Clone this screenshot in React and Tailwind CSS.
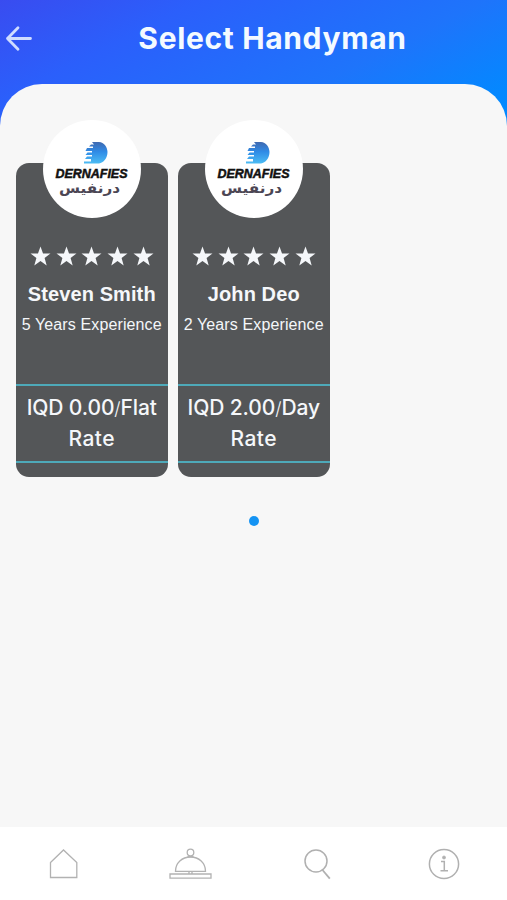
import React from "react"

const handymen = [
  { name: "Steven Smith", experience: "5 Years Experience", rate: "IQD 0.00", unit: "Flat" },
  { name: "John Deo", experience: "2 Years Experience", rate: "IQD 2.00", unit: "Day" },
]

function BrandLogo() {
  return (
    <svg className="w-full h-full" viewBox="0 0 98 98">
      <defs>
        <linearGradient id="brand" x1="0" y1="0" x2="0" y2="1">
          <stop offset="0" stopColor="#3f69b0" />
          <stop offset="0.45" stopColor="#2f8be6" />
          <stop offset="1" stopColor="#4cbcf4" />
        </linearGradient>
      </defs>
      <path
        fill="url(#brand)"
        d="M49 22H56C61 22.5 64.5 27 64.5 32C64.5 38 60.5 43 56 43.5H41V41.5H48V39H42L44 36.5H49V35H42.5L44.5 32.5H49V31H42.5L44 28H50V26.5H46L48 24.5H51Z"
      />
      <text x="12.5" y="57.8" textLength="72" lengthAdjust="spacingAndGlyphs" fontFamily="Liberation Sans, sans-serif" fontSize="12.5" fontWeight="700" fontStyle="italic" fill="#111" stroke="#111" strokeWidth="0.5">
        DERNAFIES
      </text>
      <text x="46.5" y="73" textAnchor="middle" direction="rtl" textLength="61" lengthAdjust="spacingAndGlyphs" fontFamily="DejaVu Sans, sans-serif" fontSize="14" fontWeight="700" fill="#4c4654">
        درنفيس
      </text>
    </svg>
  )
}

function Star() {
  return (
    <svg className="w-[21px] h-[21px]" viewBox="0 0 20 20" fill="#f5f7fa">
      <path d="M10 0.5L12.4 7.1H19.5L13.9 11.4L15.9 18.5L10 14.4L4.1 18.5L6.1 11.4L0.5 7.1H7.6Z" />
    </svg>
  )
}

function HandymanCard({ name, experience, rate, unit }) {
  return (
    <div className="w-[152.5px] h-[314px] rounded-[13px] bg-[#545658] flex flex-col items-center text-[#f5f7fa] whitespace-nowrap">
      <div className="w-[98px] h-[98px] -mt-[43px] rounded-full bg-white shrink-0">
        <BrandLogo />
      </div>
      <div className="flex gap-[4.7px] mt-7">
        {[0, 1, 2, 3, 4].map((i) => (
          <Star key={i} />
        ))}
      </div>
      <h2 className="mt-[13px] font-['Liberation_Sans',sans-serif] text-[20px] leading-7 font-bold tracking-[0.1px]">{name}</h2>
      <p className="mt-[5px] font-['Liberation_Sans',sans-serif] text-[16px] leading-6 tracking-[0.12px]">{experience}</p>
      <div className="mt-[47px] h-[79px] w-full border-y-2 border-[#4ea9b9] pt-[7px] text-center font-[Inter,sans-serif] font-medium text-[21px] leading-[30px]">
        <p className="tracking-[-0.1px]">
          {rate}
          <span className="font-light text-[18px]">/</span>
          {unit}
        </p>
        <p className="tracking-[0.4px]">Rate</p>
      </div>
    </div>
  )
}

function BottomNav() {
  return (
    <nav className="h-[73px] bg-white grid grid-cols-4 justify-items-center pt-[15px]">
      <svg className="w-[44px] h-[44px]" viewBox="0 0 44 44" fill="none" stroke="#b2b2b2" strokeWidth="1.3">
        <path d="M9.5 20.5L22.5 8L35.8 20.5V35.5H9.5Z" />
      </svg>
      <svg className="w-[44px] h-[44px]" viewBox="0 0 44 44" fill="none" stroke="#b2b2b2" strokeWidth="1.3">
        <circle cx="22.5" cy="10.5" r="3.3" />
        <path d="M19.5 14.7H25.5" />
        <path d="M7.5 29.3C7.5 21 14 15 22.5 15S37.5 21 37.5 29.3Z" />
        <path d="M2 32H43V36.2H2Z" />
        <path d="M21 29.5V32M24 29.5V32" />
      </svg>
      <svg className="w-[44px] h-[44px]" viewBox="0 0 44 44" fill="none" stroke="#b0b0b0" strokeWidth="1.5">
        <circle cx="21" cy="19" r="11" />
        <path d="M27.5 28L34.8 36.7" strokeWidth="1.8" />
      </svg>
      <svg className="w-[44px] h-[44px]" viewBox="0 0 44 44" fill="none" stroke="#b0b0b0" strokeWidth="1.5">
        <circle cx="22" cy="22" r="14.6" />
        <circle cx="22" cy="15.5" r="1.5" fill="#b0b0b0" strokeWidth="0.8" />
        <path d="M19 19.5H22.3V28.8M18.5 28.8H26" />
      </svg>
    </nav>
  )
}

export default function App() {
  return (
    <div className="w-full h-screen flex flex-col overflow-hidden bg-[linear-gradient(153deg,#394cf0_0px,#2b5ffb_90px,#1e74fb_220px,#0488ff_310px,#008eff_400px)] bg-[length:100%_130px] bg-no-repeat">
      <header className="h-[84px] shrink-0 grid grid-cols-[36px_1fr_36px] pb-[8px] items-center">
        <svg className="w-9 h-9" viewBox="0 0 36 36" fill="none" stroke="#cfdcff" strokeWidth="2.8" strokeLinecap="round" strokeLinejoin="round">
          <path d="M30.5 18.5H7.5M18 7.8L7.5 18.5L18 29.2" />
        </svg>
        <h1 className="ml-[38px] text-center font-[Inter,sans-serif] text-[30px] leading-9 font-bold tracking-[0.65px] text-[#f4faff] whitespace-nowrap">
          Select Handyman
        </h1>
      </header>
      <main className="flex-1 rounded-t-[42px] bg-[#f7f7f7] flex flex-col items-center">
        <div className="self-start pl-[15.5px] pt-[79px] flex gap-[9.5px]">
          {handymen.map((h) => (
            <HandymanCard key={h.name} {...h} />
          ))}
        </div>
        <span className="mt-[39px] w-[10px] h-[10px] rounded-full bg-[#1493f3]" />
      </main>
      <BottomNav />
    </div>
  )
}
